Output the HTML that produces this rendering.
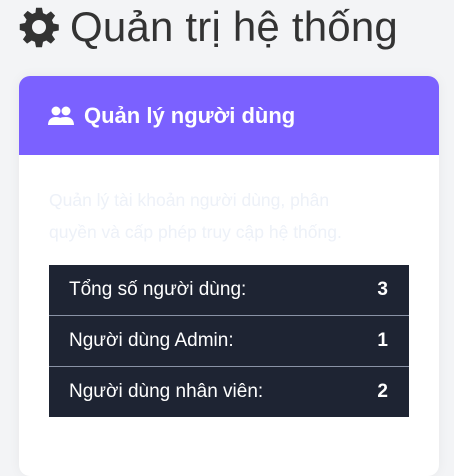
<!DOCTYPE html>
<html><head><meta charset="utf-8"><style>
body{margin:0;width:454px;height:444px;background:#f3f4f6;font-family:"Liberation Sans",Roboto,sans-serif;overflow:hidden;position:relative}
.t{position:absolute;left:70px;top:1px;font-size:42px;color:#333;line-height:52px;white-space:nowrap;letter-spacing:.2px}
.g{position:absolute;left:18px;top:6px}
.card{position:absolute;left:19px;top:76px;width:420px;height:400px;background:#fff;border-radius:11px;overflow:hidden;box-shadow:0 0 12px rgba(0,0,0,.05)}
.h{height:79px;background:#7b61ff;color:#fff;font-weight:bold;font-size:22px;line-height:79px;padding-left:65px;position:relative}
.h svg{position:absolute;left:29px;top:30px}
.d{position:absolute;left:30px;top:108px;width:318px;font-size:17.5px;line-height:32px;color:#edf1f8}
table{position:absolute;left:30px;top:189px;width:360px;border-collapse:collapse;background:#1e2433;color:#fff;font-size:19px}
td{height:50px;padding:0 20px;border-bottom:1px solid #8a93a6}
tr:last-child td{border-bottom:none}
td.n{text-align:right;font-weight:bold;padding-right:21px}
</style></head><body>
<svg class="g" width="42" height="42" viewBox="0 0 24 24"><path fill="#333" d="M10.3 1h3.4l.6 3.1 1.9.8 2.6-1.8 2.4 2.4-1.8 2.6.8 1.9 3.1.6v3.4l-3.1.6-.8 1.9 1.8 2.6-2.4 2.4-2.6-1.8-1.9.8-.6 3.1h-3.4l-.6-3.1-1.9-.8-2.6 1.8-2.4-2.4 1.8-2.6-.8-1.9L1 13.7v-3.4l3.1-.6.8-1.9-1.8-2.6 2.4-2.4 2.6 1.8 1.9-.8zM12 8a4 4 0 1 0 0 8 4 4 0 1 0 0-8z"/></svg>
<div class="t">Quản trị hệ thống</div>
<div class="card">
<div class="h"><svg width="26" height="20" viewBox="0 0 26 20"><circle cx="8" cy="5" r="4.5" fill="#fff"/><circle cx="18" cy="5" r="4.5" fill="#fff"/><path fill="#fff" d="M0 19c0-5 3-8 8-8s8 3 8 8zM14 19c0-3-1-5-2-7 1-.6 3-1 6-1 5 0 8 3 8 8z"/></svg>Quản lý người dùng</div>
<div class="d">Quản lý tài khoản người dùng, phân quyền và cấp phép truy cập hệ thống.</div>
<table>
<tr><td>Tổng số người dùng:</td><td class="n">3</td></tr>
<tr><td>Người dùng Admin:</td><td class="n">1</td></tr>
<tr><td>Người dùng nhân viên:</td><td class="n">2</td></tr>
</table>
</div>
</body></html>
